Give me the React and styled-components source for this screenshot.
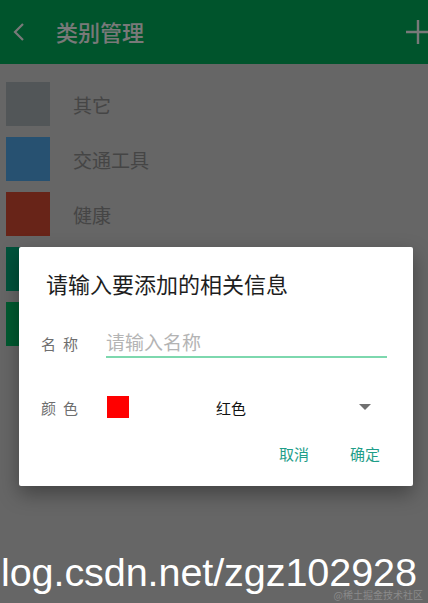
import React from 'react';
import styled, { createGlobalStyle } from 'styled-components';

const GlobalStyle = createGlobalStyle`
  html, body {
    margin: 0;
    padding: 0;
    width: 428px;
    height: 603px;
    overflow: hidden;
  }
  body {
    font-family: "Noto Sans CJK SC", "Noto Sans", sans-serif;
  }
`;

const Screen = styled.div`
  position: relative;
  width: 428px;
  height: 603px;
  background: #cccccc;
  overflow: hidden;
`;

const Toolbar = styled.div`
  height: 64px;
  background: #00a858;
  display: flex;
  align-items: center;
  color: #f2f2f2;
`;

const BackButton = styled.div`
  width: 56px;
  display: flex;
  align-items: center;
  padding-left: 12px;
  box-sizing: border-box;
`;

const ToolbarTitle = styled.div`
  flex: 1;
  font-size: 22px;
  line-height: 26px;
  font-weight: 500;
  padding-bottom: 2px;
`;

const AddButton = styled.div`
  width: 28px;
  display: flex;
  align-items: center;
  justify-content: flex-end;
  margin-right: -4px;
`;

const List = styled.div`
  display: flex;
  flex-direction: column;
  gap: 11px;
  padding: 18px 0 0 6px;
`;

const Row = styled.div`
  display: flex;
  align-items: center;
  gap: 23px;
  height: 44px;
`;

const Swatch = styled.div`
  width: 44px;
  height: 44px;
  background: ${({ color }) => color};
`;

const RowLabel = styled.div`
  font-size: 19px;
  color: #8a8a8a;
`;

const Overlay = styled.div`
  position: absolute;
  inset: 0;
  background: rgba(0, 0, 0, 0.5);
  padding: 247px 15px 0 19px;
`;

const Dialog = styled.div`
  width: 394px;
  height: 239px;
  box-sizing: border-box;
  background: #ffffff;
  border-radius: 2px;
  box-shadow: 0 8px 20px rgba(0, 0, 0, 0.35);
  display: flex;
  flex-direction: column;
`;

const DialogTitle = styled.div`
  padding: 23px 0 0 27px;
  font-size: 22px;
  line-height: 26px;
  color: #1e1e1e;
`;

const FieldRow = styled.div`
  display: flex;
  align-items: center;
  padding: 0 26px 0 22px;
  margin-top: ${({ top }) => top}px;
  height: ${({ h }) => h}px;
`;

const FieldLabel = styled.div`
  width: 65px;
  flex-shrink: 0;
  font-size: 15px;
  color: #6e6e6e;
  letter-spacing: 7px;
`;

const NameInput = styled.input`
  flex: 1;
  min-width: 0;
  height: 30px;
  box-sizing: border-box;
  border: none;
  border-bottom: 2px solid #7dd8ae;
  outline: none;
  padding: 0 0 2px 0;
  font-family: inherit;
  font-size: 19px;
  color: #222;
  background: transparent;

  &::placeholder {
    color: #b4b4b4;
  }
`;

const Spinner = styled.div`
  flex: 1;
  display: flex;
  align-items: center;
`;

const ColorChip = styled.div`
  width: 22px;
  height: 22px;
  margin-left: 1px;
  background: ${({ color }) => color};
`;

const ColorName = styled.div`
  margin-left: 87px;
  font-size: 15px;
  color: #111;
  flex: 1;
`;

const Arrow = styled.div`
  width: 0;
  height: 0;
  border-left: 6px solid transparent;
  border-right: 6px solid transparent;
  border-top: 6px solid #707070;
  margin-right: 16px;
`;

const Actions = styled.div`
  display: flex;
  justify-content: flex-end;
  gap: 41px;
  padding: 0 33px 0 0;
  margin-top: 21px;
`;

const ActionButton = styled.div`
  font-size: 15px;
  color: #1f9e89;
  line-height: 20px;
`;

const Watermark = styled.div`
  position: absolute;
  left: 1px;
  bottom: 8px;
  font-family: "Liberation Sans", Arial, sans-serif;
  font-size: 39.6px;
  color: #ffffff;
  letter-spacing: -0.1px;
  line-height: 46px;
`;

const SmallMark = styled.div`
  position: absolute;
  right: 5px;
  bottom: 1px;
  font-size: 10px;
  color: #8a8a8a;
`;

// the last two rows sit behind the dialog; only their swatches peek out
const categories = [
  { name: '其它', color: '#a4acb0' },
  { name: '交通工具', color: '#4ea2e2' },
  { name: '健康', color: '#d04830' },
  { name: '', color: '#00a476' },
  { name: '', color: '#00b460' },
];

export default function App() {
  return (
    <>
      <GlobalStyle />
      <Screen>
        <Toolbar>
          <BackButton>
            <svg width="14" height="20" viewBox="0 0 14 20">
              <path d="M11 2 L3 10 L11 18" fill="none" stroke="#f2f2f2" strokeWidth="2.2" />
            </svg>
          </BackButton>
          <ToolbarTitle>类别管理</ToolbarTitle>
          <AddButton>
            <svg width="28" height="28" viewBox="0 0 28 28">
              <path d="M14 2 V26 M2 14 H26" stroke="#f2f2f2" strokeWidth="2.4" />
            </svg>
          </AddButton>
        </Toolbar>
        <List>
          {categories.map((c, i) => (
            <Row key={i}>
              <Swatch color={c.color} />
              {c.name && <RowLabel>{c.name}</RowLabel>}
            </Row>
          ))}
        </List>
        <Overlay>
          <Dialog>
            <DialogTitle>请输入要添加的相关信息</DialogTitle>
            <FieldRow top={31} h={32}>
              <FieldLabel>名称</FieldLabel>
              <NameInput placeholder="请输入名称" />
            </FieldRow>
            <FieldRow top={32} h={32}>
              <FieldLabel>颜色</FieldLabel>
              <Spinner>
                <ColorChip color="#ff0000" />
                <ColorName>红色</ColorName>
                <Arrow />
              </Spinner>
            </FieldRow>
            <Actions>
              <ActionButton>取消</ActionButton>
              <ActionButton>确定</ActionButton>
            </Actions>
          </Dialog>
          <Watermark>log.csdn.net/zgz102928</Watermark>
          <SmallMark>@稀土掘金技术社区</SmallMark>
        </Overlay>
      </Screen>
    </>
  );
}
